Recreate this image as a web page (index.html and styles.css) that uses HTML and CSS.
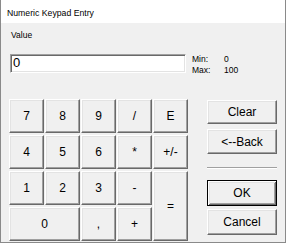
FILE: index.html
```html
<!DOCTYPE html>
<html>
<head>
<meta charset="utf-8">
<link rel="stylesheet" href="styles.css">
</head>
<body>
<div class="window">
  <div class="titlebar">Numeric Keypad Entry</div>
  <div class="client">
    <div class="label">Value</div>
    <div class="value-row">
      <div class="textbox">0</div>
      <div class="range">
        <span>Min:</span><span>0</span>
        <span>Max:</span><span>100</span>
      </div>
    </div>
    <div class="pad-area">
      <div class="keypad">
        <button class="btn">7</button>
        <button class="btn">8</button>
        <button class="btn">9</button>
        <button class="btn">/</button>
        <button class="btn">E</button>
        <button class="btn">4</button>
        <button class="btn">5</button>
        <button class="btn">6</button>
        <button class="btn">*</button>
        <button class="btn">+/-</button>
        <button class="btn">1</button>
        <button class="btn">2</button>
        <button class="btn">3</button>
        <button class="btn">-</button>
        <button class="btn tall">=</button>
        <button class="btn wide">0</button>
        <button class="btn">,</button>
        <button class="btn">+</button>
      </div>
      <div class="actions">
        <button class="btn clear">Clear</button>
        <button class="btn back">&lt;--Back</button>
        <div class="sep"></div>
        <button class="btn ok">OK</button>
        <button class="btn cancel">Cancel</button>
      </div>
    </div>
  </div>
</div>
</body>
</html>
```
FILE: styles.css
```css
html, body {
  margin: 0;
  padding: 0;
  background: #f0f0f0;
}

.window {
  width: 286px;
  height: 243px;
  box-sizing: border-box;
  border: 1px solid #8a8a8a;
  border-top: none;
  background: #f0f0f0;
  font-family: "Liberation Sans", Arial, sans-serif;
  color: #000;
  overflow: hidden;
}

.titlebar {
  height: 23px;
  box-sizing: border-box;
  padding: 3px 0 0 6px;
  line-height: 20px;
  font-size: 8.7px;
  background: #fff;
  white-space: nowrap;
}

.client {
  padding: 7px 0 0 8px;
}

.label {
  margin-left: 2px;
  font-size: 8.5px;
  line-height: 11px;
}

.value-row {
  display: flex;
  margin-top: 13px;
  padding-left: 1px;
}

.textbox {
  width: 176px;
  height: 19px;
  box-sizing: border-box;
  border: 1px solid;
  border-color: #a0a0a0 #fff #fff #a0a0a0;
  box-shadow: inset 1px 1px #696969, inset -1px -1px #e3e3e3;
  background: #fff;
  padding: 0 2px;
  font-size: 13px;
  line-height: 15px;
}

.range {
  margin-left: 6px;
  display: grid;
  grid-template-columns: 32px auto;
  font-size: 8.5px;
  line-height: 11px;
  align-self: flex-start;
}

.pad-area {
  display: flex;
  margin-top: 23px;
}

.keypad {
  display: grid;
  grid-template-columns: repeat(5, 35px);
  grid-template-rows: repeat(4, 34px);
  gap: 2px 1px;
}

.btn {
  appearance: none;
  margin: 0;
  padding: 0;
  box-sizing: border-box;
  border: 1px solid;
  border-color: #fff #696969 #696969 #fff;
  box-shadow: inset -1px -1px #a0a0a0, inset 1px 1px #e3e3e3;
  background: #f0f0f0;
  font-family: "Liberation Sans", Arial, sans-serif;
  font-size: 12px;
  color: #000;
  display: flex;
  align-items: center;
  justify-content: center;
}

.wide {
  grid-column: span 2;
}

.tall {
  grid-row: span 2;
}

.actions {
  display: flex;
  flex-direction: column;
  width: 70px;
  margin-left: 19px;
  margin-top: 1px;
}

.clear {
  height: 24px;
}

.back {
  height: 25px;
  margin-top: 5px;
}

.sep {
  margin-top: 13px;
  border-top: 1px solid #a0a0a0;
  border-bottom: 1px solid #fff;
}

.ok {
  height: 26px;
  margin-top: 11px;
  border: 1px solid #000;
  box-shadow: inset 1px 1px #fff, inset -1px -1px #696969, inset 2px 2px #e3e3e3, inset -2px -2px #a0a0a0;
}

.cancel {
  height: 26px;
  margin-top: 3px;
}
```
